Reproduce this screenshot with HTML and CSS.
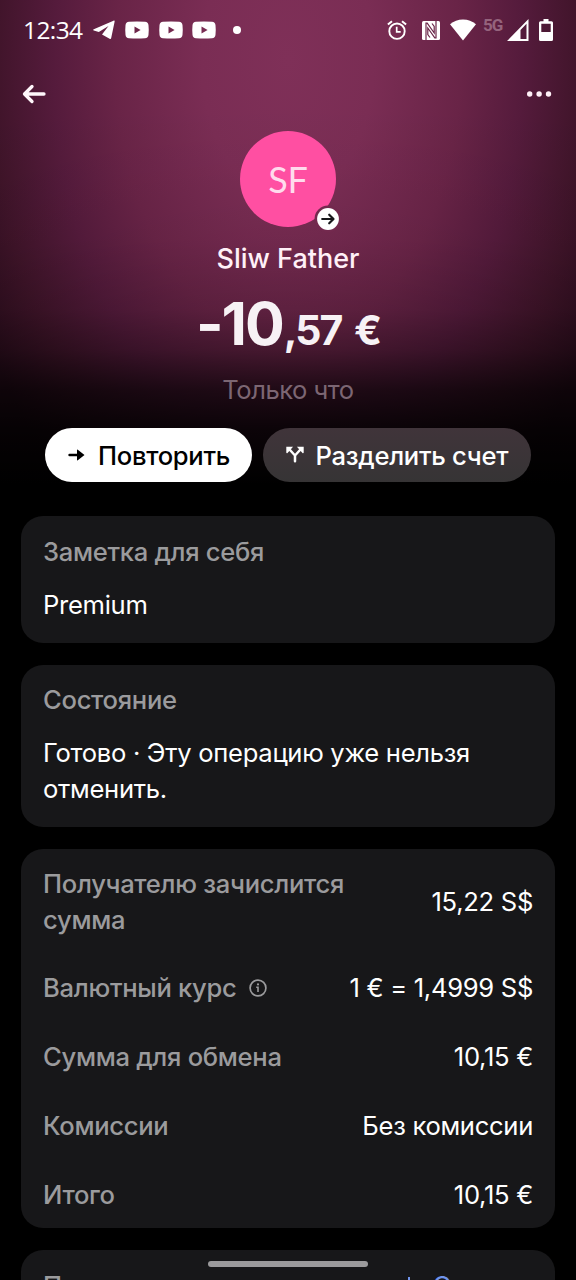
FILE: index.html
```html
<!DOCTYPE html>
<html lang="ru">
<head>
<meta charset="utf-8">
<title>Sliw Father</title>
<link rel="stylesheet" href="styles.css">
</head>
<body>
<div class="screen">
  <div class="status">
    <span class="time">12:34</span>
    <svg class="telegram" width="22" height="20" viewBox="0 0 22 20"><path d="M.8 9.300 20.500.7c.8-.3 1.300.1 1.100 1L18.200 18c-.2 1-.8 1.200-1.600.7L9 14.500l6.500-8.600L5.800 11.900.8 10.500c-.8-.3-.8-.9 0-1.200z" fill="#fff"/></svg>
    <svg class="video" width="24" height="18" viewBox="0 0 24 18"><path fill-rule="evenodd" d="M4 .8Q12 .1 20 .8q3.200.3 3.500 3.500.5 4.700 0 9.400-.3 3.200-3.500 3.500-8 .7-16 0-3.200-.3-3.500-3.500-.5-4.700 0-9.400Q.8 1.100 4 .8zM9.500 5.500v7L15.600 9z" fill="#fff"/></svg>
    <svg class="video" width="24" height="18" viewBox="0 0 24 18"><path fill-rule="evenodd" d="M4 .8Q12 .1 20 .8q3.200.3 3.500 3.500.5 4.700 0 9.400-.3 3.200-3.500 3.500-8 .7-16 0-3.200-.3-3.500-3.500-.5-4.700 0-9.400Q.8 1.100 4 .8zM9.500 5.500v7L15.600 9z" fill="#fff"/></svg>
    <svg class="video" width="24" height="18" viewBox="0 0 24 18"><path fill-rule="evenodd" d="M4 .8Q12 .1 20 .8q3.200.3 3.500 3.500.5 4.700 0 9.400-.3 3.200-3.500 3.500-8 .7-16 0-3.200-.3-3.500-3.500-.5-4.700 0-9.400Q.8 1.100 4 .8zM9.500 5.500v7L15.600 9z" fill="#fff"/></svg>
    <span class="more-dot"></span>
    <div class="system">
      <svg class="alarm" width="20" height="20" viewBox="0 0 20 20" fill="none" stroke="#fff"><circle cx="10" cy="11.200" r="7.700" stroke-width="1.900"/><path d="M.9 4.600 5 1.200M19.100 4.600 15 1.200" stroke-width="2"/><path d="M9.700 6.800v5h4" stroke-width="1.700"/></svg>
      <svg class="nfc" width="18" height="19" viewBox="0 0 18 19"><rect width="18" height="19" rx="1.500" fill="#fff"/><path d="M4 19V2.200h1.200L12.200 12V5.500L10 2.500M14 0v16.800h-1.200L5.800 7v6.500L8 16.500" fill="none" stroke="#6b2649" stroke-width="1.200"/></svg>
      <svg class="wifi" width="26" height="22" viewBox="0 0 26 22"><path d="M0 5.200Q5.500.4 13 .4T26 5.200L13 21.500z" fill="#fff"/></svg>
      <span class="net">5G</span>
      <svg class="signal" width="22" height="22" viewBox="0 0 22 22"><path fill-rule="evenodd" d="M21.500 0v22H0zM13.500 11v9h6V4.800z" fill="#fff"/></svg>
      <svg class="battery" width="14" height="22" viewBox="0 0 14 22"><path fill-rule="evenodd" d="M4.500 0h5v2.300h3q1.500 0 1.500 1.500v16.700q0 1.500-1.500 1.500h-11Q0 22 0 20.500V3.800Q0 2.300 1.500 2.300h3zM2.300 4.700V13h9.400V4.700z" fill="#fff"/></svg>
    </div>
  </div>
  <div class="nav">
    <svg width="24" height="20" viewBox="0 0 24 20" fill="none" stroke="#fff7fb" stroke-width="3.300" stroke-linecap="round" stroke-linejoin="round"><path d="M22 10H2.500M10 2.500 2.500 10l7.500 7.500"/></svg>
    <svg width="25" height="6" viewBox="0 0 25 6" fill="#fff0f7"><circle cx="2.700" cy="3" r="2.700"/><circle cx="12.100" cy="3" r="2.700"/><circle cx="21.500" cy="3" r="2.700"/></svg>
  </div>
  <div class="hero">
    <div class="avatar"><span>SF</span>
      <svg class="badge" width="28" height="28" viewBox="0 0 28 28"><circle cx="14" cy="14" r="13.500" fill="#73294e"/><circle cx="14" cy="14" r="10.900" fill="#fff"/><path d="M8.200 14h11M15.200 9.700l4.300 4.300-4.300 4.300" fill="none" stroke="#17171a" stroke-width="2.200" stroke-linecap="round" stroke-linejoin="round"/></svg>
    </div>
    <div class="name">Sliw Father</div>
    <div class="amount"><span class="whole">-10</span><span class="cents">,57 €</span></div>
    <div class="when">Только что</div>
  </div>
  <div class="actions">
    <div class="button primary"><svg width="18" height="12" viewBox="0 0 18 12"><path d="M1.500 6H12" stroke="#000" stroke-width="2.400" stroke-linecap="round"/><path d="M9.800.7 16.500 6l-6.700 5.300q-.8.500-.8-.5v-9.600q0-1 .8-.5z" fill="#000"/></svg><span>Повторить</span></div>
    <div class="button secondary"><svg width="18" height="17" viewBox="0 0 18 17"><path d="M4 4 9 9.500 14 4M9 9v6.300" fill="none" stroke="#fff" stroke-width="2.500" stroke-linecap="round"/><path d="M.3 .700h6.800L1.300 7.300Q.3 7.500.3 6.500zM17.700 .700h-6.800l5.800 6.600q1 .2 1-.8z" fill="#fff"/></svg><span>Разделить счет</span></div>
  </div>
  <div class="cards">
    <section class="card note"><div class="label">Заметка для себя</div><div class="value">Premium</div></section>
    <section class="card state"><div class="label">Состояние</div><div class="value wrap">Готово · Эту операцию уже нельзя отменить.</div></section>
    <section class="card details">
      <div class="row first"><span class="label">Получателю зачислится<br>сумма</span><span class="value">15,22 S$</span></div>
      <div class="row"><span class="label with-icon"><span>Валютный курс</span><svg width="18" height="18" viewBox="0 0 18 18"><circle cx="9" cy="9" r="7.900" fill="none" stroke="#9b9b9d" stroke-width="1.700"/><circle cx="9" cy="5.400" r="1.100" fill="#9b9b9d"/><path d="M7.200 8.200H9v4.700" fill="none" stroke="#9b9b9d" stroke-width="1.600"/></svg></span><span class="value">1 € = 1,4999 S$</span></div>
      <div class="row"><span class="label">Сумма для обмена</span><span class="value">10,15 €</span></div>
      <div class="row"><span class="label">Комиссии</span><span class="value">Без комиссии</span></div>
      <div class="row"><span class="label">Итого</span><span class="value">10,15 €</span></div>
    </section>
    <section class="card document"><div class="row"><span class="label">П</span><span class="download"><svg width="18" height="20" viewBox="0 0 18 20" fill="none" stroke="#6f93ea" stroke-width="2"><path d="M9 1v12M4 9l5 5 5-5M1 18h16"/></svg><span>Скачать</span></span></div></section>
  </div>
  <div class="home-bar"></div>
</div>
</body>
</html>
```
FILE: styles.css
```css
* { box-sizing: border-box; }
body { margin: 0; background: #000; }
svg { display: block; flex: none; }
.screen {
  position: relative;
  width: 576px;
  height: 1280px;
  overflow: hidden;
  color: #fff;
  font-family: Inter, "Liberation Sans", sans-serif;
  font-size: 25.6px;
  line-height: 36px;
  letter-spacing: -.3px;
  white-space: nowrap;
  background:
    linear-gradient(to bottom, rgba(0,0,0,0) 100px, rgba(0,0,0,.04) 240px, rgba(0,0,0,.14) 310px, rgba(0,0,0,.33) 350px, rgba(0,0,0,.68) 390px, rgba(0,0,0,.87) 430px, #000 485px),
    radial-gradient(ellipse 345px 560px at 288px 60px, #7f3058 0%, #7a2d54 25%, #692447 50%, #551b3c 68%, #3f1429 86%, #2c0d1d 100%);
}
.status { display: flex; align-items: center; height: 60px; padding: 0 23px; }
.time { width: 61px; margin-right: 9px; font: 500 24.5px/30px "Open Sans", sans-serif; letter-spacing: -.6px; }
.telegram { margin-right: 10px; }
.video { margin-right: 9.7px; }
.more-dot { width: 8px; height: 8px; margin-left: 7px; border-radius: 50%; background: #fff; }
.system { display: flex; align-items: center; margin-left: auto; }
.nfc { margin-left: 15px; }
.wifi { margin-left: 10px; }
.net { width: 21px; margin: -10px 3px 0 7px; font: 700 17px/20px Roboto, sans-serif; color: #95647d; letter-spacing: -.9px; }
.battery { margin-left: 10px; }
.nav { display: flex; align-items: center; justify-content: space-between; height: 68px; padding: 0 24px 0 22px; }
.hero { display: flex; flex-direction: column; align-items: center; padding-top: 3px; }
.avatar { position: relative; display: flex; align-items: center; justify-content: center; width: 96px; height: 96px; border-radius: 50%; background: #ff4fa2; color: #ffdbed; font: 36px/40px Lato, sans-serif; }
.badge { position: absolute; left: 74px; top: 74px; }
.name { margin-top: 14px; font-size: 27px; font-weight: 500; letter-spacing: 0; color: #fff0f7; }
.amount { display: flex; align-items: baseline; height: 72px; margin-top: 11px; line-height: 72px; font-weight: 700; color: #f7f2f5; }
.whole { font-size: 59px; letter-spacing: -2px; }
.cents { margin-left: 1px; font-size: 41px; letter-spacing: -2px; word-spacing: 5px; }
.when { margin-top: 12px; letter-spacing: -.5px; color: #7c6673; }
.actions { display: flex; gap: 11px; margin-top: 20px; padding-left: 45px; }
.button { display: flex; align-items: center; gap: 12px; height: 54px; padding-left: 23px; border-radius: 27px; font-weight: 500; }
.button span { padding-top: 2px; }
.primary { width: 207px; background: #fff; color: #000; }
.secondary { width: 268px; padding-left: 22.500px; background: linear-gradient(#40343a, #363435); }
.secondary svg { margin-top: -1px; }
.cards { display: flex; flex-direction: column; gap: 22px; padding: 34px 21px 0; }
.card { display: flex; flex-direction: column; border-radius: 22px; background: #171719; padding: 18px 22px 0; }
.label { color: #9b9b9d; font-weight: 450; }
.value { font-weight: 400; }
.note { height: 127px; gap: 17px; }
.state { height: 162px; padding-top: 17px; gap: 17px; }
.wrap { white-space: normal; }
.details { height: 379px; padding-top: 17px; gap: 33px; }
.first { margin-bottom: -1px; }
.row { display: flex; align-items: center; justify-content: space-between; }
.with-icon { display: flex; align-items: center; gap: 13px; }
.document { height: 120px; }
.download { display: flex; align-items: center; gap: 14px; color: #6f93ea; }
.home-bar { position: absolute; left: 208px; top: 1261px; width: 160px; height: 6px; border-radius: 3px; background: #9b9a9c; }
```
